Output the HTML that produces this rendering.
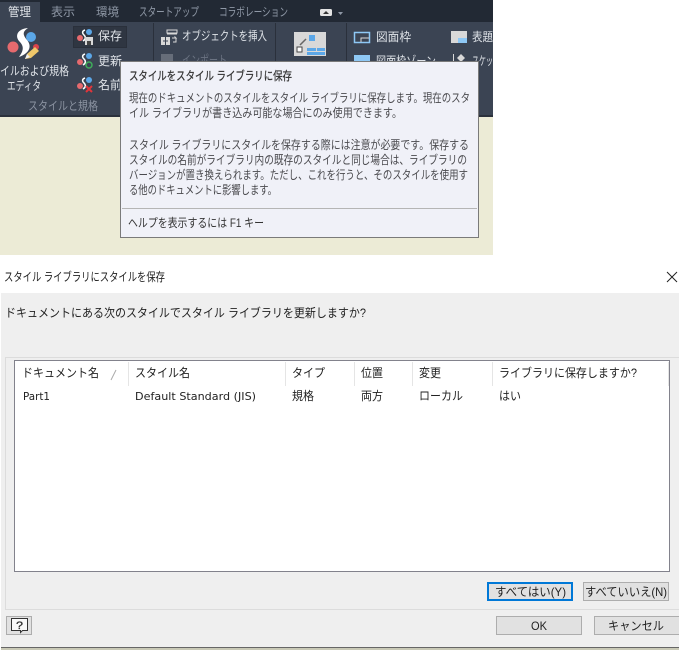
<!DOCTYPE html>
<html lang="ja">
<head>
<meta charset="utf-8">
<title>スタイル ライブラリにスタイルを保存</title>
<style>
html,body{margin:0;padding:0;width:679px;height:650px;overflow:hidden;background:#fff}
svg{display:block}
text{font-family:"Liberation Sans","Noto Sans CJK JP",sans-serif;font-size:12px}
.t{fill:#8f98a6}
.r{fill:#dfe3e8}
.g{fill:#8b93a1}
.d{fill:#4a4a4e}
.k{fill:#222}
</style>
</head>
<body>
<svg width="679" height="650" viewBox="0 0 679 650" xmlns="http://www.w3.org/2000/svg">
<rect width="679" height="650" fill="#fff"/>
<!-- app background -->
<rect x="0" y="0" width="493" height="255" fill="#ecebd6"/>
<rect x="0" y="0" width="493" height="23" fill="#222934"/>
<rect x="0" y="22" width="493" height="95" fill="#3b4453"/>
<rect x="0" y="115" width="493" height="2" fill="#2b313c"/>
<rect x="0" y="2" width="40" height="21" fill="#3b4453"/>
<!-- tabs -->
<text x="8" y="16" lengthAdjust="spacingAndGlyphs" textLength="23" class="r">管理</text>
<text x="51" y="16" lengthAdjust="spacingAndGlyphs" textLength="24" class="t">表示</text>
<text x="96" y="16" lengthAdjust="spacingAndGlyphs" textLength="23" class="t">環境</text>
<text x="139" y="16" lengthAdjust="spacingAndGlyphs" textLength="60" class="t">スタートアップ</text>
<text x="219" y="16" lengthAdjust="spacingAndGlyphs" textLength="69" class="t">コラボレーション</text>
<rect x="320" y="9" width="12" height="7" rx="1.5" fill="#e3e3e3"/>
<path d="M323 14h6l-3-3z" fill="#333"/>
<path d="M338 12h5l-2.500 3z" fill="#8f98a6"/>
<!-- separators -->
<path d="M153.500 23V104M275.500 23V62M346.500 23V62" stroke="#2a303b"/>
<!-- big icon -->
<circle cx="13" cy="47" r="5.500" fill="#e66a6e"/>
<circle cx="31" cy="37" r="5" fill="#5ba7e8"/>
<circle cx="36" cy="47" r="3" fill="#d9434b"/>
<path d="M28 28C17 29 15 36 19 41C23 45 25 49 19 57C30 53 32 46 27 40C23 35 22 32 28 28Z" fill="#fff"/>
<path d="M25 59l2-5 8-7 4 4-8 7z" fill="#efc76a"/>
<path d="M25 59l2-5 3 3z" fill="#eee"/>
<text x="0" y="75" lengthAdjust="spacingAndGlyphs" textLength="69" class="r">イルおよび規格</text>
<text x="7" y="90" lengthAdjust="spacingAndGlyphs" textLength="34" class="r">エディタ</text>
<text x="28" y="110" lengthAdjust="spacingAndGlyphs" textLength="70" class="g">スタイルと規格</text>
<!-- save highlighted -->
<rect x="73.500" y="26.500" width="53" height="21" fill="#2f3642" stroke="#2a303b"/>
<circle cx="80" cy="38" r="3" fill="#e66a6e"/>
<circle cx="89" cy="32" r="3" fill="#5ba7e8"/>
<path d="M85 30C82 31 82 33 84 35C86 37 86 39 83 41" stroke="#fff" stroke-width="1.500" fill="none"/>
<rect x="85" y="37" width="8" height="8" fill="#d8d8d8"/>
<rect x="87" y="41" width="4" height="4" fill="#444"/>
<text x="98" y="40" lengthAdjust="spacingAndGlyphs" textLength="24" class="r">保存</text>
<circle cx="80" cy="62" r="3" fill="#e66a6e"/>
<circle cx="89" cy="56" r="3" fill="#5ba7e8"/>
<path d="M85 54C82 55 82 57 84 59C86 61 86 63 83 65" stroke="#fff" stroke-width="1.500" fill="none"/>
<circle cx="89" cy="65" r="3" fill="none" stroke="#3fae5a" stroke-width="1.500"/>
<text x="98" y="65" lengthAdjust="spacingAndGlyphs" textLength="24" class="r">更新</text>
<circle cx="80" cy="86" r="3" fill="#e66a6e"/>
<circle cx="89" cy="80" r="3" fill="#5ba7e8"/>
<path d="M85 78C82 79 82 81 84 83C86 85 86 87 83 89" stroke="#fff" stroke-width="1.500" fill="none"/>
<path d="M86 86l6 6M92 86l-6 6" stroke="#e0353b" stroke-width="2"/>
<text x="98" y="89" lengthAdjust="spacingAndGlyphs" textLength="24" class="r">名前</text>
<!-- insert -->
<rect x="161" y="37" width="9" height="8" fill="#d8d8d8"/>
<path d="M163 41h5M165.500 37v8" stroke="#3b4453"/>
<path d="M167 30h10v3h-10zM167 34h10" stroke="#d8d8d8" fill="none"/>
<path d="M172 38h4l-1.500-1.500M176 38v4h-3" stroke="#d8d8d8" fill="none"/>
<text x="182" y="40" lengthAdjust="spacingAndGlyphs" textLength="85" class="r">オブジェクトを挿入</text>
<rect x="161" y="54" width="12" height="10" fill="#666d79"/>
<text x="182" y="64" lengthAdjust="spacingAndGlyphs" textLength="45" fill="#6b7382">インポート</text>
<!-- center icon -->
<rect x="294" y="32" width="32" height="24" fill="#d8d8d8"/>
<rect x="309" y="35" width="6" height="6" fill="#5ba7e8"/>
<rect x="297" y="47" width="5" height="5" fill="#fff" stroke="#444"/>
<path d="M300 45l6-6" stroke="#666" stroke-width="1.500"/>
<rect x="307" y="48" width="9" height="3" fill="#5ba7e8"/>
<rect x="317" y="48" width="8" height="3" fill="#5ba7e8"/>
<rect x="307" y="52" width="18" height="3" fill="#5ba7e8"/>
<!-- right part -->
<rect x="354.500" y="32.500" width="15" height="10" fill="none" stroke="#8ec8f5" stroke-width="1.500"/>
<path d="M361 42v-4h8" stroke="#d8d8d8" fill="none"/>
<text x="376" y="41" lengthAdjust="spacingAndGlyphs" textLength="35" class="r">図面枠</text>
<rect x="354" y="55" width="16" height="9" fill="#8ec8f5"/>
<text x="376" y="65" lengthAdjust="spacingAndGlyphs" textLength="60" class="r">図面枠ゾーン</text>
<rect x="451" y="31" width="16" height="12" fill="#d8d8d8"/>
<rect x="458" y="38" width="9" height="5" fill="#8ec8f5"/>
<text x="472" y="41" lengthAdjust="spacingAndGlyphs" textLength="21" class="r">表題</text>
<path d="M453.500 54v10" stroke="#d8d8d8"/>
<path d="M461 54l4 4-4 4-4-4z" fill="#d8d8d8"/>
<text x="472" y="65" lengthAdjust="spacingAndGlyphs" textLength="21" class="r">スケッ</text>
<!-- tooltip -->
<rect x="120.500" y="61.500" width="358" height="176" fill="#f0f1f8" stroke="#7a7a7a"/>
<text x="129" y="80" lengthAdjust="spacingAndGlyphs" textLength="163" fill="#333" stroke="#333" stroke-width=".25">スタイルをスタイル ライブラリに保存</text>
<text x="129" y="102" lengthAdjust="spacingAndGlyphs" textLength="341" class="d">現在のドキュメントのスタイルをスタイル ライブラリに保存します。現在のスタ</text>
<text x="129" y="117" lengthAdjust="spacingAndGlyphs" textLength="273" class="d">イル ライブラリが書き込み可能な場合にのみ使用できます。</text>
<text x="129" y="149" lengthAdjust="spacingAndGlyphs" textLength="340" class="d">スタイル ライブラリにスタイルを保存する際には注意が必要です。保存する</text>
<text x="129" y="164" lengthAdjust="spacingAndGlyphs" textLength="338" class="d">スタイルの名前がライブラリ内の既存のスタイルと同じ場合は、ライブラリの</text>
<text x="129" y="179" lengthAdjust="spacingAndGlyphs" textLength="339" class="d">バージョンが置き換えられます。ただし、これを行うと、そのスタイルを使用す</text>
<text x="129" y="194" lengthAdjust="spacingAndGlyphs" textLength="148" class="d">る他のドキュメントに影響します。</text>
<path d="M122 208.500H477" stroke="#b5b5b5"/>
<text x="128" y="227" lengthAdjust="spacingAndGlyphs" textLength="136" fill="#333">ヘルプを表示するには F1 キー</text>
<!-- dialog -->
<text x="4" y="281" lengthAdjust="spacingAndGlyphs" textLength="161" class="k">スタイル ライブラリにスタイルを保存</text>
<path d="M667 272l10 10M677 272l-10 10" stroke="#222" stroke-width="1"/>
<rect x="1" y="293" width="678" height="354" fill="#efefef"/>
<text x="5" y="317" lengthAdjust="spacingAndGlyphs" textLength="361" class="k">ドキュメントにある次のスタイルでスタイル ライブラリを更新しますか?</text>
<path d="M679 357.500H5.500V609.500H679" fill="none" stroke="#dcdcdc"/>
<rect x="14.500" y="360.500" width="655" height="211" fill="#fff" stroke="#82828c"/>
<path d="M128.500 362V386M285.500 362V386M354.500 362V386M412.500 362V386M492.500 362V386M668.500 362V386" stroke="#e5e5e5"/>
<text x="22" y="377" lengthAdjust="spacingAndGlyphs" textLength="77" class="k">ドキュメント名</text>
<path d="M111 380l5-10" stroke="#aaa"/>
<text x="135" y="377" lengthAdjust="spacingAndGlyphs" textLength="55" class="k">スタイル名</text>
<text x="292" y="377" lengthAdjust="spacingAndGlyphs" textLength="33" class="k">タイプ</text>
<text x="361" y="377" lengthAdjust="spacingAndGlyphs" textLength="22" class="k">位置</text>
<text x="419" y="377" lengthAdjust="spacingAndGlyphs" textLength="22" class="k">変更</text>
<text x="499" y="377" lengthAdjust="spacingAndGlyphs" textLength="138" class="k">ライブラリに保存しますか?</text>
<text x="23" y="400" lengthAdjust="spacingAndGlyphs" textLength="27" class="k" style="font-family:'DejaVu Sans',sans-serif;font-size:11px">Part1</text>
<text x="135" y="400" lengthAdjust="spacingAndGlyphs" textLength="121" class="k" style="font-family:'DejaVu Sans',sans-serif;font-size:11px">Default Standard (JIS)</text>
<text x="292" y="400" lengthAdjust="spacingAndGlyphs" textLength="22" class="k">規格</text>
<text x="361" y="400" lengthAdjust="spacingAndGlyphs" textLength="22" class="k">両方</text>
<text x="419" y="400" lengthAdjust="spacingAndGlyphs" textLength="44" class="k">ローカル</text>
<text x="499" y="400" lengthAdjust="spacingAndGlyphs" textLength="22" class="k">はい</text>
<!-- buttons -->
<rect x="488" y="583" width="84" height="17" fill="#e1e1e1" stroke="#0078d7" stroke-width="2"/>
<text x="495" y="596" lengthAdjust="spacingAndGlyphs" textLength="71" class="k">すべてはい(Y)</text>
<rect x="583.500" y="582.500" width="85" height="18" fill="#e1e1e1" stroke="#adadad"/>
<text x="585" y="596" lengthAdjust="spacingAndGlyphs" textLength="82" class="k">すべていいえ(N)</text>
<rect x="496.500" y="616.500" width="85" height="18" fill="#e1e1e1" stroke="#adadad"/>
<text x="531" y="630" lengthAdjust="spacingAndGlyphs" textLength="16" class="k">OK</text>
<rect x="594.500" y="616.500" width="90" height="18" fill="#e1e1e1" stroke="#adadad"/>
<text x="608" y="630" lengthAdjust="spacingAndGlyphs" textLength="56" class="k">キャンセル</text>
<rect x="6.500" y="616.500" width="25" height="18" fill="#e1e1e1" stroke="#adadad"/>
<path d="M11.500 618.500H27.500V630.500H22.500L20.500 632.500V630.500H11.500Z" fill="#fafafa" stroke="#333"/>
<text x="16" y="629" lengthAdjust="spacingAndGlyphs" textLength="7" fill="#333" stroke="#333" stroke-width=".3" style="font-size:11px">?</text>
<!-- bottom strip -->
<rect x="1" y="647" width="678" height="1" fill="#666"/>
<rect x="1" y="648" width="678" height="2" fill="#c9c9b6"/>
</svg>
</body>
</html>
